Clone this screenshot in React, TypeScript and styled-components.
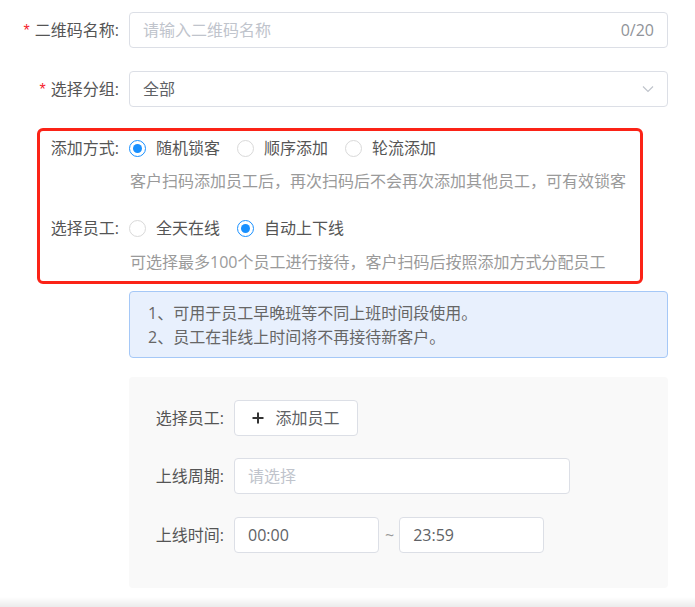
import React from "react";
import styled, { createGlobalStyle } from "styled-components";

const GlobalStyle = createGlobalStyle`
  html, body { margin: 0; padding: 0; background: #fff; }
  body {
    font-family: "Open Sans", "Noto Sans CJK SC", sans-serif;
    font-size: 16px;
    color: #555;
  }
  * { box-sizing: border-box; }
`;

const Page = styled.div`
  width: 695px;
  padding-top: 12px;
`;

const FormItem = styled.div<{ $mb?: number; $mt?: number; $h?: number }>`
  display: flex;
  align-items: center;
  height: ${(p) => p.$h ?? 36}px;
  margin-top: ${(p) => p.$mt ?? 0}px;
  margin-bottom: ${(p) => p.$mb ?? 0}px;
`;

const Label = styled.label<{ $w: number }>`
  flex: none;
  width: ${(p) => p.$w}px;
  padding-right: 10px;
  text-align: right;
  line-height: 20px;
  white-space: nowrap;
  color: #555;
`;

const Star = styled.span`
  color: #f5222d;
  margin-right: 5px;
  font-family: "Liberation Sans", sans-serif;
`;

const InputBox = styled.div<{ $w: number }>`
  flex: none;
  width: ${(p) => p.$w}px;
  height: 36px;
  border: 1px solid #dcdfe6;
  border-radius: 4px;
  background: #fff;
  display: flex;
  align-items: center;
  justify-content: space-between;
  padding: 0 13px;
  line-height: 20px;
  white-space: nowrap;
`;

const Placeholder = styled.span`
  color: #c0c4cc;
`;

const Value = styled.span`
  color: #606266;
`;

const Counter = styled.span`
  color: #909399;
`;

const RedBox = styled.section`
  margin: 21px 0 0 37px;
  width: 606px;
  border: 3px solid #fb2317;
  border-radius: 6px;
  padding-bottom: 9px;
`;

const RadioGroup = styled.div`
  display: flex;
  align-items: center;
`;

const RadioOption = styled.label`
  display: flex;
  align-items: center;
  gap: 10px;
  margin-right: 17px;
  color: #555;
  line-height: 20px;
  white-space: nowrap;
`;

const RadioCircle = styled.span<{ $checked?: boolean }>`
  flex: none;
  width: 17px;
  height: 17px;
  border-radius: 50%;
  border: 1px solid ${(p) => (p.$checked ? "#1890ff" : "#d9d9d9")};
  background: #fff;
  display: flex;
  align-items: center;
  justify-content: center;
  &::after {
    content: "";
    width: 9px;
    height: 9px;
    border-radius: 50%;
    background: ${(p) => (p.$checked ? "#1890ff" : "transparent")};
  }
`;

const Help = styled.div<{ $mt: number }>`
  margin: ${(p) => p.$mt}px 0 0 90px;
  line-height: 20px;
  color: #9a9a9a;
  white-space: nowrap;
`;

const InfoBox = styled.div`
  margin: 7px 0 0 129px;
  width: 539px;
  border: 1px solid #a5c8f7;
  background: #e8f0fd;
  border-radius: 4px;
  padding: 9px 18px 8px;
  line-height: 24px;
  color: #666;
`;

const Panel = styled.div`
  margin: 19px 0 0 129px;
  width: 539px;
  background: #f9f9f9;
  border-radius: 4px;
  padding: 23px 0 35px 25px;
`;

const AddButton = styled.button`
  flex: none;
  width: 124px;
  height: 36px;
  border: 1px solid #dcdfe6;
  border-radius: 4px;
  background: #fff;
  display: flex;
  align-items: center;
  justify-content: center;
  gap: 11px;
  padding: 0;
  font: inherit;
  color: #606266;
  line-height: 20px;
  cursor: pointer;
`;

const Tilde = styled.span`
  margin: 0 5px 0 6px;
  color: #999;
  line-height: 20px;
`;

const BottomShadow = styled.div`
  margin-top: 9px;
  height: 10px;
  background: linear-gradient(to bottom, rgba(0, 0, 0, 0), rgba(0, 0, 0, 0.08));
`;

const Chevron = () => (
  <svg width="12" height="8" viewBox="0 0 12 8" fill="none">
    <path d="M1 1.5 L6 6.5 L11 1.5" stroke="#c0c4cc" strokeWidth="1.2" />
  </svg>
);

const Plus = () => (
  <svg width="12" height="12" viewBox="0 0 12 12" fill="none">
    <path d="M6 0.5 V11.5 M0.5 6 H11.5" stroke="#333" strokeWidth="2" />
  </svg>
);

type Opt = { label: string; checked?: boolean };

const Radios = ({ options }: { options: Opt[] }) => (
  <RadioGroup>
    {options.map((o) => (
      <RadioOption key={o.label}>
        <RadioCircle $checked={o.checked} />
        {o.label}
      </RadioOption>
    ))}
  </RadioGroup>
);

export default function App() {
  return (
    <Page>
      <GlobalStyle />
      <FormItem $mb={23}>
        <Label $w={129}>
          <Star>*</Star>二维码名称:
        </Label>
        <InputBox $w={539}>
          <Placeholder>请输入二维码名称</Placeholder>
          <Counter>0/20</Counter>
        </InputBox>
      </FormItem>
      <FormItem>
        <Label $w={129}>
          <Star>*</Star>选择分组:
        </Label>
        <InputBox $w={539}>
          <Value>全部</Value>
          <Chevron />
        </InputBox>
      </FormItem>

      <RedBox>
        <FormItem $h={34}>
          <Label $w={89}>添加方式:</Label>
          <Radios
            options={[
              { label: "随机锁客", checked: true },
              { label: "顺序添加" },
              { label: "轮流添加" },
            ]}
          />
        </FormItem>
        <Help $mt={6}>客户扫码添加员工后，再次扫码后不会再次添加其他员工，可有效锁客</Help>
        <FormItem $h={34} $mt={20}>
          <Label $w={89}>选择员工:</Label>
          <Radios
            options={[{ label: "全天在线" }, { label: "自动上下线", checked: true }]}
          />
        </FormItem>
        <Help $mt={7}>可选择最多100个员工进行接待，客户扫码后按照添加方式分配员工</Help>
      </RedBox>

      <InfoBox>
        <div>1、可用于员工早晚班等不同上班时间段使用。</div>
        <div>2、员工在非线上时间将不再接待新客户。</div>
      </InfoBox>

      <Panel>
        <FormItem $mb={22}>
          <Label $w={80}>选择员工:</Label>
          <AddButton type="button">
            <Plus />
            添加员工
          </AddButton>
        </FormItem>
        <FormItem $mb={23}>
          <Label $w={80}>上线周期:</Label>
          <InputBox $w={336}>
            <Placeholder>请选择</Placeholder>
          </InputBox>
        </FormItem>
        <FormItem>
          <Label $w={80}>上线时间:</Label>
          <InputBox $w={145}>
            <Value>00:00</Value>
          </InputBox>
          <Tilde>~</Tilde>
          <InputBox $w={145}>
            <Value>23:59</Value>
          </InputBox>
        </FormItem>
      </Panel>
      <BottomShadow />
    </Page>
  );
}
